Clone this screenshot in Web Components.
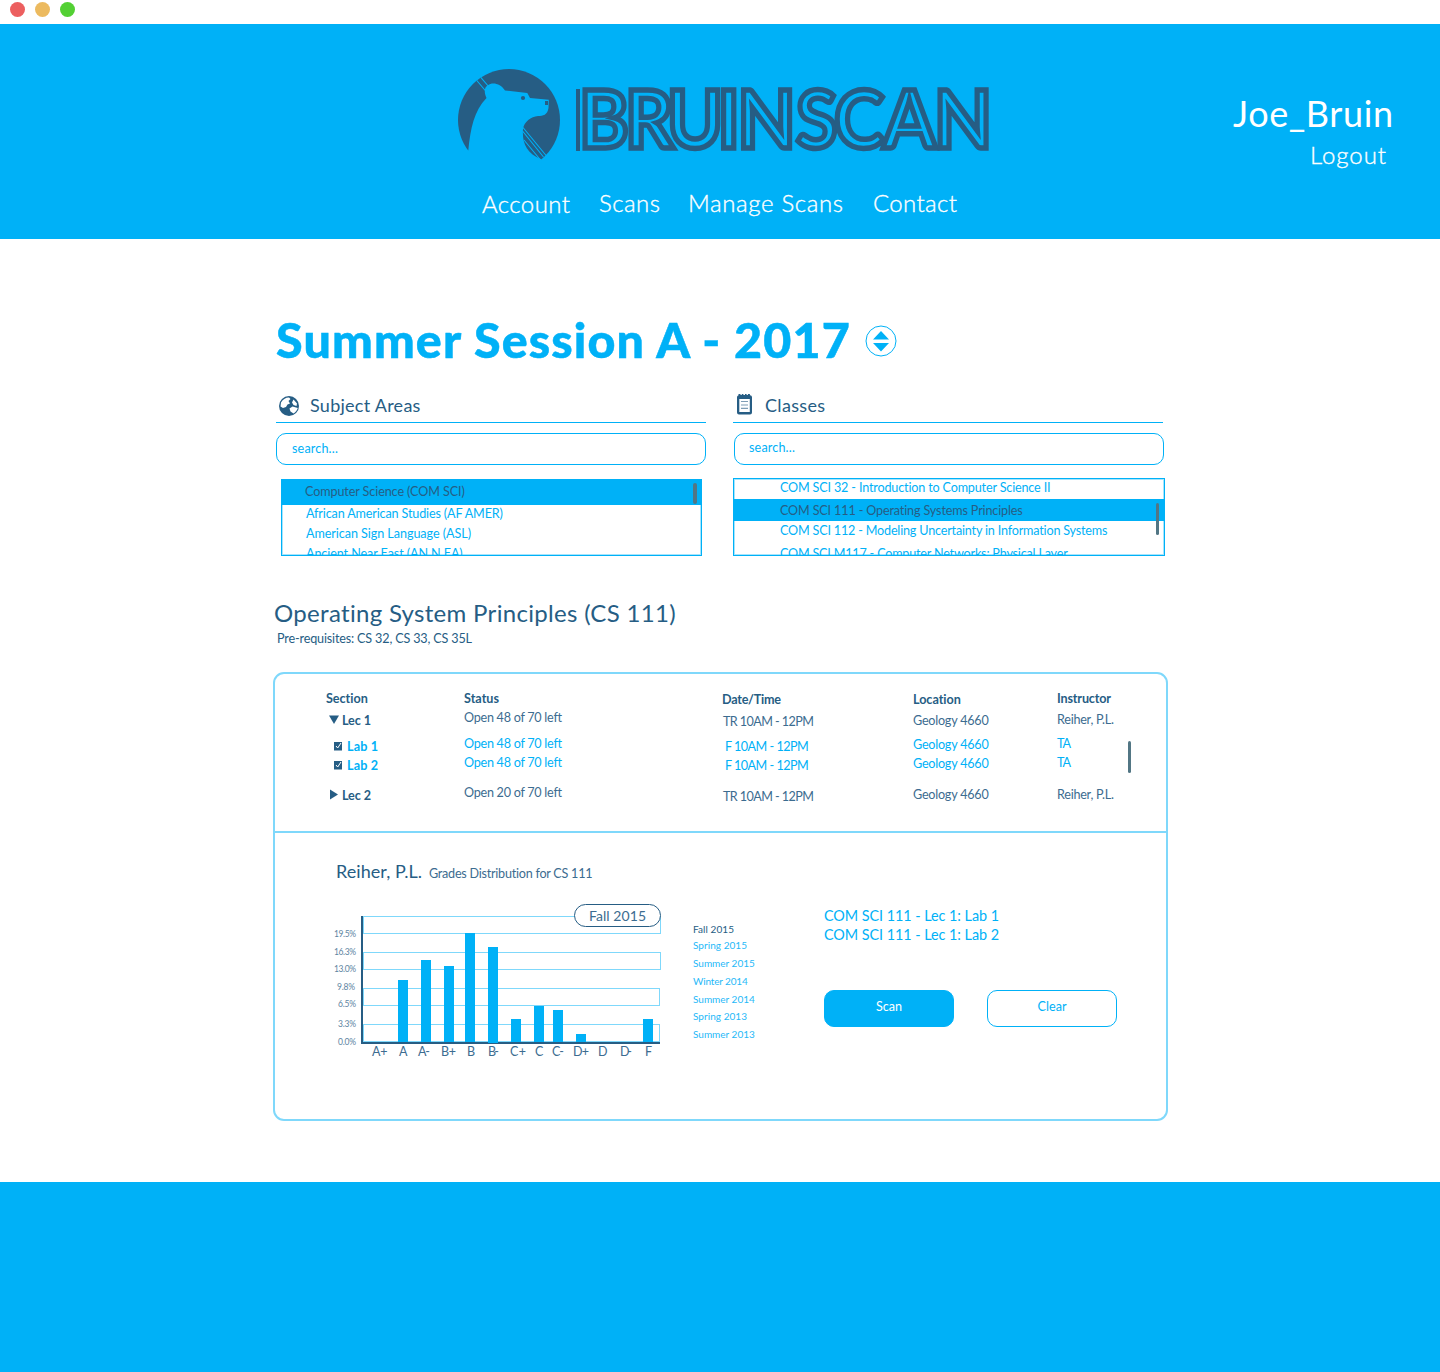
<!DOCTYPE html>
<html lang="en">
<head>
<meta charset="utf-8">
<title>BruinScan</title>
<style>
  :root { --blue: #00b1f7; --soft: #7fd8fb; --navy: #265d84; }
  body { margin: 0; background: #fff; font-family: Lato, "Open Sans", sans-serif; color: var(--navy); }
</style>
</head>
<body>
<bruin-app></bruin-app>
<script>
const ctx = document.createElement('canvas').getContext('2d');

// One line of type. s: size, w: weight, fit: set width, gap: space above, in: indent, c: colour
class TypeLine extends HTMLElement {
  connectedCallback() {
    if (this.shadowRoot) return;
    const n = (k, d) => this.hasAttribute(k) ? parseFloat(this.getAttribute(k)) : d;
    const s = n('s', 12.6), w = n('w', 400), fit = n('fit', 0);
    const text = this.textContent.trim();
    const lh = Math.round(.987 * s) + Math.round(.213 * s);
    let ls = 0;
    if (fit) {
      ctx.font = `${w} ${s}px Lato`;
      ls = (fit - ctx.measureText(text).width) / Math.max(1, text.length - 1);
    }
    this.attachShadow({ mode: 'open' }).innerHTML = `<style>
      :host { display: block; flex: none; white-space: nowrap; font: ${w} ${s}px/${lh}px Lato, "Open Sans", sans-serif;
        letter-spacing: ${ls.toFixed(3)}px; color: ${this.getAttribute('c') || 'inherit'};
        ${w === 300 ? '-webkit-text-stroke: .35px currentColor;' : ''}
        ${w === 900 ? '-webkit-text-stroke: .5px currentColor;' : ''}
        margin-top: ${n('gap', 0)}px; margin-left: ${n('in', 0)}px; ${fit ? `width:${fit}px;` : ''} }
    </style><slot></slot>`;
  }
}
customElements.define('type-line', TypeLine);

const define = (name, html) => customElements.define(name, class extends HTMLElement {
  connectedCallback() {
    if (!this.shadowRoot) this.attachShadow({ mode: 'open' }).innerHTML = typeof html === 'function' ? html(this) : html;
  }
});

define('window-bar', `<style>
  :host { display: flex; gap: 10px; height: 22px; padding: 2px 0 0 10px; }
  i { width: 15px; height: 15px; border-radius: 50%; }
</style><i style="background:#ec5f5f"></i><i style="background:#ecba5f"></i><i style="background:#53d034"></i>`);

define('brand-logo', () => {
  // Each wordmark letter is centred on its own axis, slightly condensed
  const scale = .95, centers = [605.5, 652.5, 695, 729, 766.5, 816, 860.5, 909.5, 963];
  ctx.font = '700 79.5px Lato';
  const xs = [...'BRUINSCAN'].map((ch, i) => {
    const m = ctx.measureText(ch);
    return (centers[i] / scale - (m.actualBoundingBoxRight - m.actualBoundingBoxLeft) / 2).toFixed(2);
  });
  return `<style>
  :host { display: block; width: 540px; height: 96px; }
  svg { display: block; overflow: visible; }
  text { font: 700 79.5px Lato, sans-serif; fill: #00b1f7; stroke: #265d84; stroke-width: 5.5; stroke-miterlimit: 6; }
</style><svg width="540" height="96" viewBox="455 66 540 96">
  <circle cx="509" cy="120" r="51" fill="#265d84"/>
  <path fill="#00b1f7" d="M468.300 150.500C470.500 128 474 111 486.500 98C484 93 484 87 488 85.300C492.500 81.500 501 84 505 90.500L527.300 93L530 98L548.800 99.700L548.500 108C547.500 115 543 116 538 116C531 116.500 524 122 523 129C522 142 526 153 541.300 159.300L541 176L464 176L464 150Z"/>
  <circle cx="523" cy="98" r="2.100" fill="#265d84"/>
  <path fill="#265d84" d="M545 101h3v4h-3z"/>
  <path stroke="#00b1f7" stroke-width="1.100" fill="none" d="M476.800 80.500L486.500 92M480.800 77.300L489 87M523 127.500L546.500 156M522.500 131L543.500 157M524 140L540.500 160"/>
  <path fill="#265d84" d="M576 89h4v62h-4z"/>
  <text transform="scale(${scale} 1)" y="148" x="${xs.join(' ')}">BRUINSCAN</text>
</svg>`;
});

define('site-nav', `<style>:host { display: flex; height: 40px; color: #fff; }</style><slot></slot>`);
define('user-box', `<style>:host { display: block; color: #fff; }</style><slot></slot>`);

define('site-header', `<style>
  :host { display: block; height: 215px; background: var(--blue); }
  .top { display: flex; height: 143px; padding: 0 0 0 455px; }
  brand-logo { margin-top: 42px; }
  user-box { margin: 67px 0 0 238px; }
  site-nav { padding: 21px 0 0 482px; }
</style>
<div class="top"><brand-logo></brand-logo>
  <user-box><type-line s="36" fit="160">Joe_Bruin</type-line><type-line s="24" w="300" fit="76" in="77" gap="5">Logout</type-line></user-box>
</div>
<site-nav>
  <type-line s="24" w="300" fit="88" gap="1">Account</type-line>
  <type-line s="24" w="300" fit="61" in="29">Scans</type-line>
  <type-line s="24" w="300" fit="155" in="28">Manage Scans</type-line>
  <type-line s="24" w="300" fit="84" in="30">Contact</type-line>
</site-nav>`);

define('term-title', `<style>
  :host { display: flex; height: 84px; padding: 71px 0 0 276px; color: var(--blue); }
  svg { margin: 15px 0 0 11px; }
</style><slot></slot>
<svg width="32" height="32" viewBox="865 325 32 32"><circle cx="881" cy="341" r="15" fill="none" stroke="#00b1f7"/><path fill="#00b1f7" d="M873 339.500h16l-8-8.500zM873 343h16l-8 8.500z"/></svg>`);

const icons = {
  globe: `<svg width="22" height="22" viewBox="278 395 22 22"><circle cx="289" cy="406" r="10" fill="#265d84"/><path fill="#fff" d="M281 402.500C282.500 399.500 285.500 397.500 289 397.500L290.500 399L288.500 401L290 403.500L287.500 404.500L286 407L283 408L280.500 406.500ZM293.500 399.500L297 403.500L296.500 406L293.500 405L292 402.500ZM289.500 408.500L292.500 406.500L297.800 408C297 410.500 295.500 412.500 293.500 413.500L290.500 411.500Z"/></svg>`,
  notes: `<svg width="16" height="22" viewBox="736 393 16 22"><path fill="#265d84" d="M737 397a2 2 0 0 1 1.500-1.800V394h2v1h1.300v-1h1.600v1h1.600v-1h1.600v1h1.300v-1h2v1.200A2 2 0 0 1 752 397v15.500a2 2 0 0 1-2 2H739a2 2 0 0 1-2-2z"/><path fill="#fff" d="M739.300 399h10.500v13h-10.500z"/><path stroke="#7f9db5" stroke-width="1.200" d="M741 401.500h7M741 405h7M741 408.300h7"/></svg>`
};

define('picker-panel', el => `<style>
  :host { display: block; width: 430px; }
  header { display: flex; height: 29px; border-bottom: 1px solid var(--blue); box-sizing: border-box; }
  header svg { flex: none; margin: ${el.getAttribute('icon') === 'globe' ? '1px 10px 0 2px' : '-1px 13px 0 3px'}; }
  .notes { margin-left: -1px; width: 430px; }
  .search { box-sizing: border-box; height: 32px; margin-top: 10px; border: 1px solid var(--blue); border-radius: 10px; padding: 3px 0 0 ${el.getAttribute('icon') === 'globe' ? 15 : 14}px; color: var(--blue); }
</style>
<header class="${el.getAttribute('icon')}">${icons[el.getAttribute('icon')]}<type-line s="18" fit="${el.getAttribute('fit')}">${el.getAttribute('label')}</type-line></header>
<div class="search"><type-line fit="46" gap="${el.getAttribute('icon') === 'globe' ? 4 : 3}">search…</type-line></div>
<slot></slot>`);

define('option-list', `<style>
  :host { display: block; position: relative; box-sizing: border-box; overflow: hidden; border: 1px solid var(--blue); box-shadow: inset 0 0 0 1px rgba(0,177,247,.35); color: var(--blue); }
</style><slot></slot>`);
define('option-row', el => `<style>
  :host { display: block; box-sizing: border-box; height: ${el.getAttribute('h')}px; padding-top: ${el.getAttribute('pt')}px; padding-left: ${el.getAttribute('pl')}px;
  ${el.hasAttribute('selected') ? 'background: var(--blue); color: var(--navy);' : ''} }
</style><slot></slot>`);
define('scroll-thumb', el => `<style>
  :host { display: block; width: ${el.getAttribute('w')}px; height: ${el.getAttribute('h')}px; border-radius: 2px; background: #527684; }
</style>`);

define('course-heading', `<style>:host { display: block; height: 117px; padding: 43px 0 0 274px; box-sizing: border-box; }</style><slot></slot>`);

define('section-table', `<style>
  :host { display: grid; grid-template-columns: 138px 258px 191px 144px 71px auto; height: 159px; padding: 0 0 0 51px; box-sizing: border-box; border-bottom: 2px solid var(--soft); }
  .c { padding-top: 17px; }
  .c.d { padding-top: 18px; }
  .r { display: flex; align-items: flex-start; }
  .r svg { flex: none; display: block; }
  .b { color: var(--blue); }
  type-line.n { color: #3c6c90; }
  scroll-thumb { margin-top: 67px; }
</style>
<div class="c"><type-line w="700" fit="42">Section</type-line>
  <div class="r" style="margin-top:7px"><svg width="12" height="12" style="margin-left:3px"><path d="M0 2.500h10l-5 8.500z" fill="#265d84"/></svg><type-line w="700" fit="29" in="1">Lec 1</type-line></div>
  <div class="r b" style="margin-top:11px"><svg width="9" height="12" style="margin-left:8px"><path d="M0 3h8v8.500H0z" fill="#265d84"/><path d="M2 7l1.700 2L7 4" stroke="#fff" fill="none"/></svg><type-line w="700" fit="31" in="4">Lab 1</type-line></div>
  <div class="r b" style="margin-top:4px"><svg width="9" height="12" style="margin-left:8px"><path d="M0 3h8v8.500H0z" fill="#265d84"/><path d="M2 7l1.700 2L7 4" stroke="#fff" fill="none"/></svg><type-line w="700" fit="31" in="4">Lab 2</type-line></div>
  <div class="r" style="margin-top:15px"><svg width="12" height="12" style="margin-left:4px"><path d="M0 1.500l8 5-8 5z" fill="#265d84"/></svg><type-line w="700" fit="29">Lec 2</type-line></div>
</div>
<div class="c"><type-line w="700" fit="35">Status</type-line>
  <type-line class="n" fit="98" gap="4">Open 48 of 70 left</type-line>
  <type-line class="b" fit="98" gap="11">Open 48 of 70 left</type-line>
  <type-line class="b" fit="98" gap="4">Open 48 of 70 left</type-line>
  <type-line class="n" fit="98" gap="15">Open 20 of 70 left</type-line></div>
<div class="c d"><type-line w="700" fit="59">Date/Time</type-line>
  <type-line class="n" fit="91" gap="7" in="1">TR 10AM - 12PM</type-line>
  <type-line class="b" fit="84" gap="10" in="3">F 10AM - 12PM</type-line>
  <type-line class="b" fit="84" gap="4" in="3">F 10AM - 12PM</type-line>
  <type-line class="n" fit="91" gap="16" in="1">TR 10AM - 12PM</type-line></div>
<div class="c d"><type-line w="700" fit="48">Location</type-line>
  <type-line class="n" fit="76" gap="6">Geology 4660</type-line>
  <type-line class="b" fit="76" gap="9">Geology 4660</type-line>
  <type-line class="b" fit="76" gap="4">Geology 4660</type-line>
  <type-line class="n" fit="76" gap="16">Geology 4660</type-line></div>
<div class="c"><type-line w="700" fit="54">Instructor</type-line>
  <type-line class="n" fit="57" gap="6">Reiher, P.L.</type-line>
  <type-line class="b" fit="14" gap="9">TA</type-line>
  <type-line class="b" fit="14" gap="4">TA</type-line>
  <type-line class="n" fit="57" gap="17">Reiher, P.L.</type-line></div>
<scroll-thumb w="3" h="32"></scroll-thumb>`);

define('grade-chart', () => {
  const bars = [[398,980],[421,960],[444,966],[465,933],[488,947,1043],[511,1019],[534,1006],[553,1010],[576,1034],[643,1019]];
  const ys = [['19.5%',334,937,22],['16.3%',334,955,22],['13.0%',334,972,22],['9.8%',337,990,18],['6.5%',338,1007,18],['3.3%',338,1027,18],['0.0%',338,1045,18]];
  const xs = [['A+',372,15.500],['A',399,8.500],['A-',418,12],['B+',441,15],['B',467,7.500],['B-',488,11],['C+',510,16],['C',535,9],['C-',552,12],['D+',573,16],['D',598,8.500],['D-',620,12],['F',645,6.500]];
  const grid = [[916.5,660.5],[952.5,660.5],[988.5,659.5],[1024.5,659.5]];
  return `<style>
    :host { display: block; position: relative; width: 335px; height: 165px; }
    svg { display: block; }
    text { font: 12.5px Lato, sans-serif; fill: #3c6c90; }
    .y { font-size: 8.500px; fill: #5d84a1; }
    .tag { position: absolute; left: 244px; top: 4px; width: 87px; height: 23px; box-sizing: border-box; padding: 2px 0 0 14px; border: 1px solid #265d84; border-radius: 12px; background: #fff; color: #3c6c90; }
  </style><svg width="335" height="165" viewBox="330 900 335 165">
    ${grid.map(([y, r]) => `<rect x="363.500" y="${y}" width="${r - 363.5}" height="17" fill="none" stroke="#7fd8fb"/>`).join('')}
    <path fill="#265d84" d="M361 916h2v128h-2zM361 1042h299v2H361z"/>
    ${bars.map(([x, y, b = 1042]) => `<rect x="${x}" y="${y}" width="10" height="${b - y}" fill="#00b1f7"/>`).join('')}
    ${ys.map(([t, x, y, w]) => `<text class="y" x="${x}" y="${y}" textLength="${w}">${t}</text>`).join('')}
    ${xs.map(([t, x, w]) => `<text x="${x}" y="1056" textLength="${w}">${t}</text>`).join('')}
  </svg><div class="tag"><type-line s="14" fit="57">Fall 2015</type-line></div>`;
});

define('term-history', `<style>:host { display: block; color: #1fb9f8; }</style><slot></slot>`);

define('action-button', el => `<style>
  :host { display: flex; justify-content: center; width: 130px; height: 37px; box-sizing: border-box; padding-top: 8px; border: 1px solid var(--blue); border-radius: 10px;
  ${el.hasAttribute('primary') ? 'background: var(--blue); color: #fff;' : 'color: var(--blue);'} }
</style><slot></slot>`);

define('scan-summary', `<style>
  :host { display: block; color: var(--blue); }
  .actions { display: flex; gap: 33px; margin-top: 47px; }
</style><slot></slot><div class="actions">
  <action-button primary><type-line fit="26">Scan</type-line></action-button>
  <action-button><type-line fit="29">Clear</type-line></action-button></div>`);

define('instructor-detail', `<style>
  .title { display: flex; padding: 27px 0 0 61px; }
  .body { display: flex; align-items: flex-start; padding: 18px 0 0 55px; }
  term-history { margin: 23px 0 0 28px; width: 131px; }
  scan-summary { margin-top: 7px; }
</style>
<div class="title"><type-line s="18" fit="86">Reiher, P.L.</type-line><type-line fit="164" gap="6" in="7" c="#3c6c90">Grades Distribution for CS 111</type-line></div>
<div class="body"><grade-chart></grade-chart>
<term-history>
  <type-line s="10" fit="41" c="#265d84">Fall 2015</type-line>
  <type-line s="10" fit="54" gap="4">Spring 2015</type-line>
  <type-line s="10" fit="62" gap="6">Summer 2015</type-line>
  <type-line s="10" fit="55" gap="6">Winter 2014</type-line>
  <type-line s="10" fit="62" gap="6">Summer 2014</type-line>
  <type-line s="10" fit="54" gap="5">Spring 2013</type-line>
  <type-line s="10" fit="62" gap="6">Summer 2013</type-line>
</term-history>
<scan-summary>
  <type-line s="14.4" fit="175">COM SCI 111 - Lec 1: Lab 1</type-line>
  <type-line s="14.4" fit="175" gap="2">COM SCI 111 - Lec 1: Lab 2</type-line>
</scan-summary></div>`);

define('course-card', `<style>
  :host { display: block; box-sizing: border-box; width: 895px; height: 449px; margin-left: 273px; border: 2px solid var(--soft); border-radius: 11px; }
</style><section-table></section-table><instructor-detail></instructor-detail>`);

define('site-footer', `<style>:host { display: block; height: 190px; margin-top: 61px; background: var(--blue); }</style>`);

define('bruin-app', `<style>
  :host { display: flex; flex-direction: column; width: 1440px; height: 1372px; }
  .pickers { display: flex; align-items: flex-start; gap: 28px; height: 161px; padding-left: 276px; }
  .l { width: 421px; height: 77px; margin: 14px 0 0 5px; }
  .r { width: 432px; height: 78px; margin: 13px 0 0 -1px; }
  scroll-thumb { position: absolute; }
</style>
<window-bar></window-bar>
<site-header></site-header>
<term-title><type-line s="48.400" w="900" fit="578">Summer Session A - 2017</type-line></term-title>
<div class="pickers">
  <picker-panel icon="globe" label="Subject Areas" fit="111">
    <option-list class="l">
      <option-row selected h="25" pt="4" pl="23"><type-line fit="160">Computer Science (COM SCI)</type-line></option-row>
      <option-row h="20" pt="1" pl="24"><type-line fit="198">African American Studies (AF AMER)</type-line></option-row>
      <option-row h="20" pt="1" pl="24"><type-line fit="165">American Sign Language (ASL)</type-line></option-row>
      <option-row h="20" pt="1" pl="24"><type-line fit="157">Ancient Near East (AN N EA)</type-line></option-row>
      <scroll-thumb w="4" h="21" style="left:411px;top:3px"></scroll-thumb>
    </option-list>
  </picker-panel>
  <picker-panel icon="notes" label="Classes" fit="60">
    <option-list class="r">
      <option-row h="20" pt="1" pl="46"><type-line fit="271">COM SCI 32 - Introduction to Computer Science II</type-line></option-row>
      <option-row selected h="22" pt="4" pl="46"><type-line fit="243">COM SCI 111 - Operating Systems Principles</type-line></option-row>
      <option-row h="22" pt="2" pl="46"><type-line fit="328">COM SCI 112 - Modeling Uncertainty in Information Systems</type-line></option-row>
      <option-row h="20" pt="3" pl="46"><type-line fit="288">COM SCI M117 - Computer Networks: Physical Layer</type-line></option-row>
      <scroll-thumb w="3" h="32" style="left:422px;top:24px"></scroll-thumb>
    </option-list>
  </picker-panel>
</div>
<course-heading><type-line s="24" fit="402">Operating System Principles (CS 111)</type-line><type-line fit="195" gap="4" in="3">Pre-requisites: CS 32, CS 33, CS 35L</type-line></course-heading>
<course-card></course-card>
<site-footer></site-footer>`);
</script>
</body>
</html>
